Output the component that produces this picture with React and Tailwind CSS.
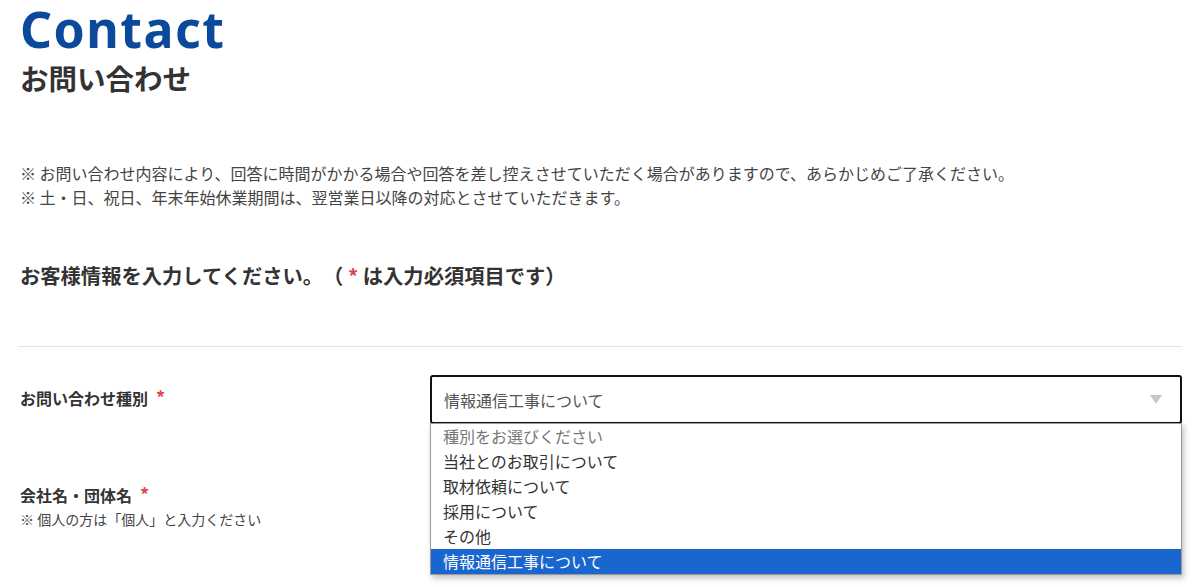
import React from 'react';

const jp = '[font-family:"Noto_Sans_CJK_JP","Noto_Sans",sans-serif]';

const options = [
  '種別をお選びください',
  '当社とのお取引について',
  '取材依頼について',
  '採用について',
  'その他',
  '情報通信工事について',
];

const Req = () => <span className="ml-[8px] text-[18px] text-[#e0474c]">*</span>;

export default function App() {
  return (
    <div className={`w-[1200px] h-[587px] overflow-hidden bg-white text-[#333] [text-spacing-trim:space-all] ${jp}`}>
      <div className="px-[18px]">
        <h1 className="pl-[2px] text-[50px] leading-[58px] font-bold tracking-[1.5px] text-[#0b4a9a] [font-family:'Noto_Sans',sans-serif]">
          Contact
        </h1>
        <h2 className="pl-[2px] text-[28.5px] leading-[40px] font-bold text-[#333]">お問い合わせ</h2>

        <div className="mt-[63px] pl-[2px] text-[16px] leading-[24px] text-[#444]">
          <p>※ お問い合わせ内容により、回答に時間がかかる場合や回答を差し控えさせていただく場合がありますので、あらかじめご了承ください。</p>
          <p>※ 土・日、祝日、年末年始休業期間は、翌営業日以降の対応とさせていただきます。</p>
        </div>

        <p className="mt-[51px] pl-[2px] text-[20.3px] leading-[30px] font-bold text-[#333]">
          お客様情報を入力してください。（ <span className="text-[#e0474c]">*</span> は入力必須項目です）
        </p>

        <div className="mt-[56px] border-t border-[#e3e3e3]" />

        <div className="mt-[28px] flex">
          <div className="w-[412px] pl-[2px] pt-[11px] text-[16px] leading-[22px] font-bold">
            お問い合わせ種別<Req />
          </div>
          <div className="relative flex-1">
            <div className="h-[49px] flex items-center justify-between rounded-[3px] border-2 border-[#111] pl-[12px] pr-[18px] text-[16px] text-[#555]">
              <span>情報通信工事について</span>
              <svg width="12" height="10" viewBox="0 0 12 10">
                <path d="M0 0h12L6 9z" fill="#c8c8c8" />
              </svg>
            </div>
            <ul className="absolute left-0 right-0 top-[48px] border border-[#9a9a9a] bg-white shadow-[2px_3px_6px_rgba(0,0,0,0.25)] text-[16px]">
              {options.map((o, i) => (
                <li
                  key={o}
                  className={`h-[25px] leading-[25px] pl-[12px] ${
                    i === 5 ? 'bg-[#1a66cf] text-white' : i === 0 ? 'text-[#777]' : 'text-[#333]'
                  }`}
                >
                  {o}
                </li>
              ))}
            </ul>
          </div>
        </div>

        <div className="mt-[59px] pl-[2px]">
          <div className="text-[16px] leading-[22px] font-bold">
            会社名・団体名<Req />
          </div>
          <div className="mt-[3px] text-[14px] leading-[20px] text-[#444]">※ 個人の方は「個人」と入力ください</div>
        </div>
      </div>
    </div>
  );
}
